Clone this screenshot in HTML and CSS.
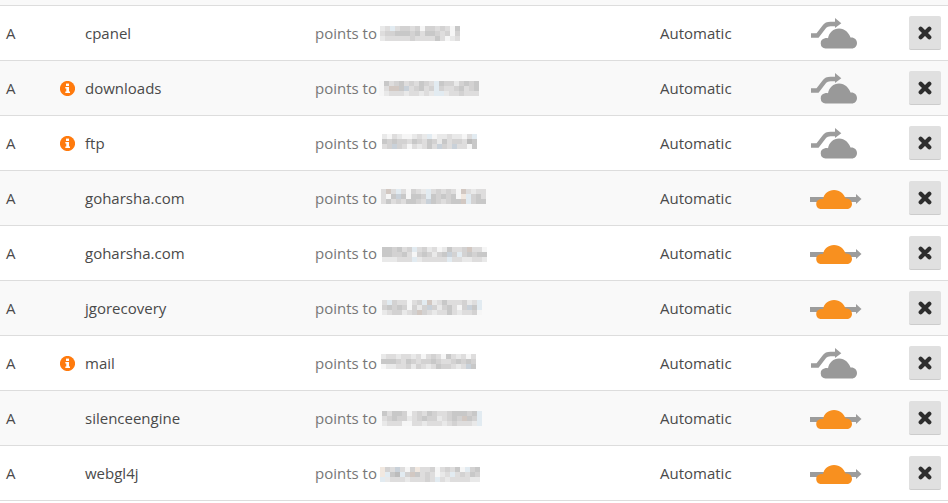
FILE: index.html
```html
<!DOCTYPE html>
<html lang="en">
<head>
<meta charset="utf-8">
<title>DNS records</title>
<link rel="stylesheet" href="styles.css">
</head>
<body>
<svg class="defs" width="0" height="0" aria-hidden="true">
  <symbol id="info" viewBox="0 0 15 15">
    <circle cx="7.5" cy="7.5" r="7.6" fill="#ff7a0d"/>
    <rect x="6" y="2.6" width="3" height="2.4" fill="#fff"/>
    <path d="M5.300 6h3.700v4.500h1v1.500H5.300v-1.500h1V7.400h-1z" fill="#fff"/>
  </symbol>
  <symbol id="x" viewBox="0 0 14 14">
    <path d="M2.700 2.700l8.600 8.600M11.300 2.700l-8.600 8.600" stroke="#2d2d2d" stroke-width="4.200" stroke-linecap="round" fill="none"/>
  </symbol>
  <symbol id="off" viewBox="0 1 60 44">
    <path d="M6 25.500h6.500L19.500 16.500c1.500-2 3-2.500 6-2.500h5" fill="none" stroke="#9c9c9c" stroke-width="4.400"/>
    <path d="M30 8l6.300 5.300L30 18z" fill="#9c9c9c"/>
    <path transform="translate(5 9)" d="M15.500 29.500A5.200 5.200 0 0 1 15 19.200C16 18.800 17 18.900 18 19.200C19 13.500 23.500 9.500 29 9.500C35 9.500 39 14 40.500 18.500C44 18 47 20.500 47 24C47 27.300 44.500 29.500 42 29.500Z" fill="#999"/>
  </symbol>
  <symbol id="on" viewBox="0 -4 60 44">
    <rect x="5" y="17" width="47" height="5" fill="#9c9c9c"/>
    <path d="M51 14l5.500 5-5.500 5z" fill="#9c9c9c"/>
    <path d="M15.500 29A5 5 0 0 1 15 19.200C16 18.800 17 18.900 18 19.200C19 13.500 23.500 10 29 10C35 10 39 14 40.500 18.500C44 18 47 20.500 47 24C47 27 44.500 29 42 29Z" fill="#f8901f"/>
  </symbol>
</svg>
<main class="records">
  <div class="row"><span>A</span><span class="flag"></span><span class="name">cpanel</span><span class="target"><span class="lead">points to</span><span class="ip" data-dx="1" data-dy="0" data-px="edgdccdcfccdcdfb dccbbbcbdbbcdcfc edddddcddddbdfed"></span></span><span>Automatic</span><span class="proxy"><svg><use href="#off"/></svg></span><button class="del" aria-label="Delete"><svg><use href="#x"/></svg></button></div>
  <div class="row"><span>A</span><span class="flag"><svg><use href="#info"/></svg></span><span class="name">downloads</span><span class="target"><span class="lead">points to</span><span class="ip" data-dx="0" data-dy="0" data-px="fbdcbdcdbcdgbccecbcb fdjjbidcbdcgcddcbdcb fedddeddedeggeddcddd"></span></span><span>Automatic</span><span class="proxy"><svg><use href="#off"/></svg></span><button class="del" aria-label="Delete"><svg><use href="#x"/></svg></button></div>
  <div class="row"><span>A</span><span class="flag"><svg><use href="#info"/></svg></span><span class="name">ftp</span><span class="target"><span class="lead">points to</span><span class="ip" data-dx="3" data-dy="-2" data-px="efdeffedegfeedeefdg bcbccdbcdbcebdccdab dcicdfdedbdicdiddfb"></span></span><span>Automatic</span><span class="proxy"><svg><use href="#off"/></svg></span><button class="del" aria-label="Delete"><svg><use href="#x"/></svg></button></div>
  <div class="row"><span>A</span><span class="flag"></span><span class="name">goharsha.com</span><span class="target"><span class="lead">points to</span><span class="ip" data-dx="2" data-dy="-2" data-px="djdgdfcdegdcdcdfjdedd dfbibfbbcgbcbcbfhgcbd dbdcdbbcdibcdcbbjgcbb"></span></span><span>Automatic</span><span class="proxy"><svg><use href="#on"/></svg></span><button class="del" aria-label="Delete"><svg><use href="#x"/></svg></button></div>
  <div class="row"><span>A</span><span class="flag"></span><span class="name">goharsha.com</span><span class="target"><span class="lead">points to</span><span class="ip" data-dx="3" data-dy="1" data-px="bbcbdcgdcedfebddcjddf bbccbdfcbcecbicgcbcbb eeedddgedddddgddeedde"></span></span><span>Automatic</span><span class="proxy"><svg><use href="#on"/></svg></span><button class="del" aria-label="Delete"><svg><use href="#x"/></svg></button></div>
  <div class="row"><span>A</span><span class="flag"></span><span class="name">jgorecovery</span><span class="target"><span class="lead">points to</span><span class="ip" data-dx="3" data-dy="-1" data-px="dgcddfdcgjedbdddcedg cbcbcfcecicecbdfcibg edccedcjcdeddbdeddcf"></span></span><span>Automatic</span><span class="proxy"><svg><use href="#on"/></svg></span><button class="del" aria-label="Delete"><svg><use href="#x"/></svg></button></div>
  <div class="row"><span>A</span><span class="flag"><svg><use href="#info"/></svg></span><span class="name">mail</span><span class="target"><span class="lead">points to</span><span class="ip" data-dx="2" data-dy="-2" data-px="eddeddedfdcdfbdedfd bbbcdbcdccbcddcbcbc feeddcecdedbccdedib"></span></span><span>Automatic</span><span class="proxy"><svg><use href="#off"/></svg></span><button class="del" aria-label="Delete"><svg><use href="#x"/></svg></button></div>
  <div class="row"><span>A</span><span class="flag"></span><span class="name">silenceengine</span><span class="target"><span class="lead">points to</span><span class="ip" data-dx="3" data-dy="0" data-px="bdbbcfdcdbcddcbbbcbg dcbccedcbccedcbcjbcg edddffddedddedcdddeg"></span></span><span>Automatic</span><span class="proxy"><svg><use href="#on"/></svg></span><button class="del" aria-label="Delete"><svg><use href="#x"/></svg></button></div>
  <div class="row"><span>A</span><span class="flag"></span><span class="name">webgl4j</span><span class="target"><span class="lead">points to</span><span class="ip" data-dx="1" data-dy="1" data-px="hcdidfchddcfdcdbfgcb hgbagcjbdcdfedgdcdbc gedddedddcdgdeddddee"></span></span><span>Automatic</span><span class="proxy"><svg><use href="#on"/></svg></span><button class="del" aria-label="Delete"><svg><use href="#x"/></svg></button></div>
</main>
<script src="mosaic.js"></script>
</body>
</html>
```
FILE: styles.css
```css
html, body { margin: 0; background: #fff; }
body {
  font-family: "Open Sans", sans-serif;
  font-size: 15px;
  line-height: 20px;
  color: #4a4a4a;
  padding-top: 5px;
  overflow: hidden;
  height: 503px;
  box-sizing: border-box;
  background: linear-gradient(#f9f9f9, #f9f9f9) top / 100% 5px no-repeat, #fff;
}
.defs { position: absolute; }
.records { border-top: 1px solid #ddd; }
.row {
  display: grid;
  grid-template-columns: 54px 25px 230px 345px 150px 1fr 32px;
  align-items: center;
  height: 54px;
  border-bottom: 1px solid #ddd;
  padding-left: 6px;
  padding-right: 7px;
  background: #fff;
}
.row:nth-child(even) { background: #f9f9f9; }
.flag { height: 15px; padding-top: 1px; }
.flag svg { display: block; width: 15px; height: 15px; }
.target { color: #777; display: flex; align-items: center; }
.lead { width: 64px; }
.ip { display: block; height: 14px; }
.ip svg { display: block; }
.proxy { height: 44px; }
.proxy svg { display: block; width: 60px; height: 44px; margin-left: -5px; }
.del {
  width: 32px;
  height: 34px;
  padding: 0;
  border: 0;
  border-bottom: 1px solid #ccc;
  border-radius: 2px;
  background: #e0e0e0;
  display: flex;
  align-items: center;
  justify-content: center;
}
.del svg { width: 14px; height: 14px; }
```
FILE: mosaic.js
```js
var shades = {
  a: "#bcbcbc", b: "#c8c8c8", c: "#d3d2d2", d: "#dedddd", e: "#e9e9e9", f: "#f6f6f6",
  g: "#e2ebf1", h: "#f1e8e0", i: "#c9d1d9", j: "#d2c8c2"
};
document.querySelectorAll(".ip").forEach(function (el) {
  var rows = el.dataset.px.split(" "), cell = 5;
  var cols = Math.max.apply(null, rows.map(function (r) { return r.length; }));
  var rects = "";
  rows.forEach(function (r, y) {
    r.split("").forEach(function (c, x) {
      rects += '<rect x="' + x * cell + '" y="' + y * cell + '" width="' + cell + '" height="' + cell + '" fill="' + shades[c] + '"/>';
    });
  });
  el.innerHTML = '<svg width="' + cols * cell + '" height="15" shape-rendering="crispEdges">' + rects + "</svg>";
  el.firstChild.style.transform = "translate(" + el.dataset.dx + "px," + el.dataset.dy + "px)";
});
```
